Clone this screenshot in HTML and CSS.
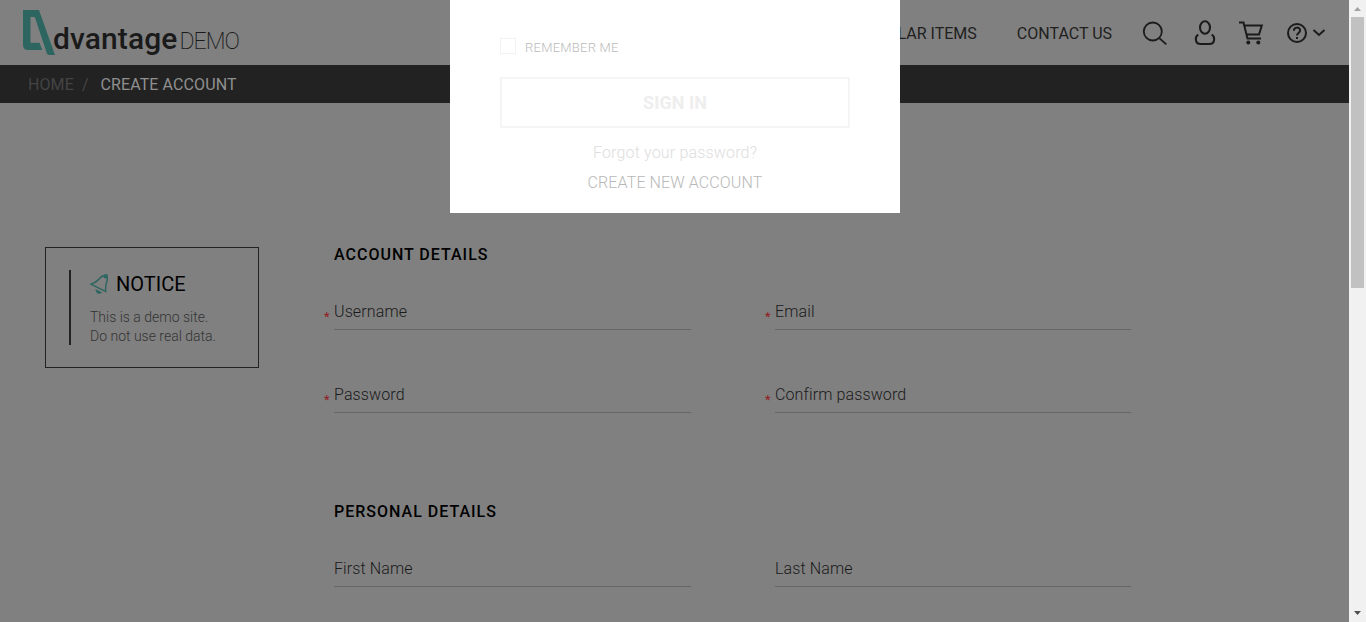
FILE: index.html
```html
<!DOCTYPE html>
<html lang="en">
<head>
<meta charset="utf-8">
<title>Advantage Demo - Create Account</title>
<link rel="stylesheet" href="styles.css">
</head>
<body>
<div class="window">
  <div class="site">
    <header class="header">
      <a class="logo">
        <svg class="logo-mark" width="32" height="45" viewBox="0 0 32 45"><path fill="#2d6661" fill-rule="evenodd" d="M0 0H16L32 45H26Q24.300 45 23.700 43L11.800 7H7.500V32.800H16.500L19.300 40H5Q0 40 0 35Z"/></svg>
        <span class="logo-name">dvantage</span><span class="logo-demo">DEMO</span>
      </a>
      <nav class="nav">
        <a class="nav-link">POPULAR ITEMS</a>
        <a class="nav-link">CONTACT US</a>
        <svg class="icon icon-search" width="26" height="26" viewBox="0 0 26 26"><circle cx="10.800" cy="10.500" r="9"/><path d="M17 16.800L24.300 23.300"/></svg>
        <svg class="icon icon-user" width="22" height="26" viewBox="0 0 22 26"><ellipse cx="11" cy="7.500" rx="5" ry="6.200"/><path d="M4.300 14.700C2 16 1.600 19 2.200 21.200C2.800 23.400 4.500 24 6.500 24H15.500C17.500 24 19.200 23.400 19.800 21.200C20.400 19 20 16 17.700 14.700"/></svg>
        <svg class="icon icon-cart" width="26" height="26" viewBox="0 0 26 26"><path d="M0 2.500H4.500L8.500 18.500H22M5.300 5.500H22.800L20 14.500H8"/><circle class="dot" cx="9.300" cy="22.500" r="2"/><circle class="dot" cx="19.300" cy="22.500" r="2"/></svg>
        <svg class="icon icon-help" width="40" height="22" viewBox="0 0 40 22"><circle cx="11" cy="11" r="9"/><path d="M7.900 8.800C7.900 4.600 14.100 4.600 14.100 8.600C14.100 11 11 11 11 13.500M11 15V17"/><path d="M27.500 8L33 13L38.500 8"/></svg>
      </nav>
    </header>
    <div class="breadcrumb"><span class="crumb">HOME</span><span class="slash">/</span><span class="current">CREATE ACCOUNT</span></div>
    <main class="content">
      <aside class="notice">
        <div class="notice-body">
          <h2 class="notice-title"><svg class="bell" width="19" height="20" viewBox="0 0 19 20"><path d="M1 10.200C5 9 8 6.500 10.200 3.800C12 1.700 14.500 1.600 16.300 2.600C17.900 4 17.500 6 16.500 8.500C15.500 11.500 15.400 14 15.700 17.600Z"/><circle cx="15.800" cy="2.200" r="1.500"/><path d="M6.500 16.500Q7.500 20 10.500 18.500Z" fill="#2d6661"/></svg>NOTICE</h2>
          <p class="notice-text">This is a demo site.<br>Do not use real data.</p>
        </div>
      </aside>
      <form class="form">
        <section class="group">
          <h3 class="group-title">ACCOUNT DETAILS</h3>
          <div class="fields">
            <label class="field required">Username</label>
            <label class="field required">Email</label>
            <label class="field required">Password</label>
            <label class="field required">Confirm password</label>
          </div>
        </section>
        <section class="group">
          <h3 class="group-title">PERSONAL DETAILS</h3>
          <div class="fields">
            <label class="field">First Name</label>
            <label class="field">Last Name</label>
          </div>
        </section>
      </form>
    </main>
  </div>
  <div class="scrollbar">
    <svg class="arrow" width="17" height="17" viewBox="0 0 17 17"><path fill="#a3a3a3" d="M5 11L8.500 7L12 11Z"/></svg>
    <div class="thumb"></div>
    <svg class="arrow" width="17" height="17" viewBox="0 0 17 17"><path fill="#505050" d="M5 6H12L8.500 10Z"/></svg>
  </div>
</div>
<div class="login">
  <div class="remember"><span class="checkbox"></span>REMEMBER ME</div>
  <button class="sign-in">SIGN IN</button>
  <a class="forgot">Forgot your password?</a>
  <a class="create">CREATE NEW ACCOUNT</a>
</div>
</body>
</html>
```
FILE: styles.css
```css
* { box-sizing: border-box; }
body { margin: 0; overflow: hidden; font-family: Roboto, sans-serif; font-size: 16px; line-height: 20px; }
h2, h3, p { margin: 0; }
.window { display: flex; height: 622px; }
.site { flex: 1; min-width: 0; background: #808080; overflow: hidden; }
.header { display: flex; justify-content: space-between; height: 65px; padding: 0 23px; }
.logo { display: flex; align-items: baseline; padding-top: 10px; }
.logo-mark { flex: none; align-self: flex-start; }
.logo-name { margin: 17px 0 0 -2px; font-size: 30px; line-height: 24px; font-weight: 500; letter-spacing: .1px; color: #1a1a1a; }
.logo-demo { margin-left: 2px; font-size: 23px; font-weight: 200; letter-spacing: -1px; color: #1a1a1a; }
.nav { display: flex; align-items: center; padding-top: 2px; }
.nav-link { margin-right: 40px; color: #202020; }
.nav-link + .nav-link { margin-right: 30px; }
.icon { flex: none; fill: none; stroke: #1b1b1b; stroke-width: 2; }
.icon-search { stroke-width: 1.8; }
.icon-user { margin: -2px 0 0 26px; stroke-width: 2.1; }
.icon-cart { margin: -1px 0 0 23px; }
.icon-help { margin: -2px 0 0 21px; }
.dot { fill: #1b1b1b; stroke: none; }
.breadcrumb { display: flex; align-items: center; height: 38px; padding: 2px 0 0 28px; background: #222; }
.crumb { color: #444; letter-spacing: .1px; }
.slash { margin: 0 12px 0 8px; color: #444; }
.current { color: #909090; letter-spacing: .1px; }
.content { display: flex; align-items: flex-start; padding: 144px 0 0 45px; }
.notice { width: 214px; height: 121px; border: 1px solid #222; padding: 22px 23px; }
.notice-body { height: 75px; border-left: 2px solid #222; padding: 3px 0 0 19px; }
.notice-title { display: flex; align-items: center; font-size: 20px; font-weight: 400; line-height: 22px; color: #000; }
.bell { flex: none; margin-right: 7px; fill: none; stroke: #2d6661; stroke-width: 1.5; }
.notice-text { margin-top: 13px; font-size: 14px; line-height: 19px; font-weight: 300; color: #333; white-space: nowrap; }
.form { width: 797px; margin: -2px 0 0 75px; }
.group { height: 257px; }
.group-title { font-size: 16px; line-height: 20px; font-weight: 500; letter-spacing: 1px; color: #000; }
.fields { display: grid; grid-template-columns: 357px 356px; column-gap: 84px; row-gap: 55px; padding-top: 37px; }
.field { display: block; height: 28px; border-bottom: 1px solid #666; line-height: 20px; font-weight: 300; letter-spacing: .12px; color: #1a1a1a; }
.required::before { content: "*"; float: left; width: 10px; margin-left: -10px; padding-top: 5px; font-size: 13px; font-weight: 400; color: #931c22; }
.scrollbar { display: flex; flex-direction: column; justify-content: space-between; width: 17px; background: #f1f1f1; }
.arrow { flex: none; }
.thumb { width: 13px; height: 271px; margin: 0 2px auto; background: #c1c1c1; }
.login { position: absolute; top: 0; left: 450px; display: flex; flex-direction: column; align-items: center; width: 450px; height: 213px; padding: 38px 50px 0; background: #fff; font-weight: 300; }
.remember { display: flex; align-items: center; align-self: flex-start; font-size: 13px; letter-spacing: .25px; color: #bbb; }
.checkbox { width: 16px; height: 16px; margin: -4px 9px 0 0; border: 1px solid #f3f3f3; }
.sign-in { width: 350px; height: 51px; margin-top: 19px; border: 2px solid #f5f5f5; background: none; font: 700 18px Roboto, sans-serif; color: #eee; }
.forgot { margin-top: 15px; letter-spacing: .17px; color: #ddd; }
.create { margin-top: 10px; letter-spacing: .12px; color: #b8b8b8; }
```
